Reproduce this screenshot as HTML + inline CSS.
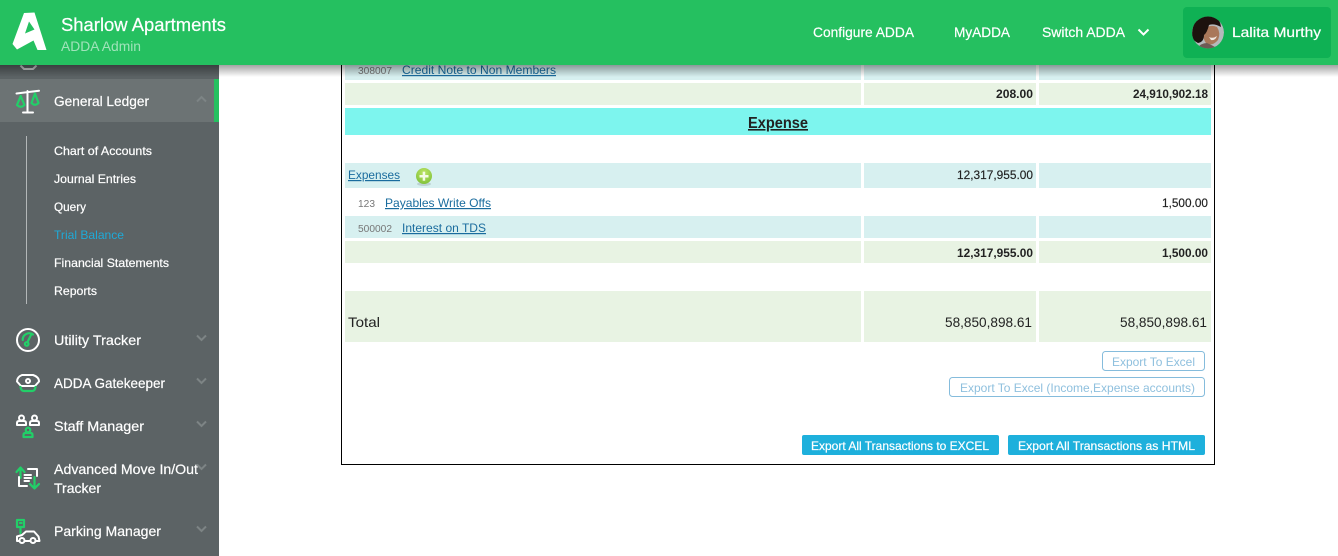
<!DOCTYPE html>
<html lang="en">
<head>
<meta charset="utf-8">
<title>Trial Balance</title>
<style>
html,body{margin:0;padding:0;width:1338px;height:556px;overflow:hidden;background:#fff}
svg{display:block;position:absolute;left:0;top:0}
text{font-family:"Liberation Sans",sans-serif}
.w{fill:#fff;stroke:#fff;stroke-width:.2px}
.s{font-size:12px}
.m{font-size:14px}
.n{font-size:12px;fill:#222;stroke:#222;stroke-width:.15px}
.b{font-weight:bold;font-size:12px;fill:#222}
.c{font-size:10px;fill:#777}
.l{font-size:12px;fill:#1a6c9e;text-decoration:underline}
.ib{stroke:#fff;stroke-width:2;fill:none;stroke-linecap:round;stroke-linejoin:round}
.ig{stroke:#22cf68;stroke-width:2.2;fill:none;stroke-linecap:round;stroke-linejoin:round}
.ch{stroke:#7d8485;stroke-width:2;fill:none}
</style>
</head>
<body>
<svg width="1338" height="556" viewBox="0 0 1338 556" xmlns="http://www.w3.org/2000/svg">
<defs>
<linearGradient id="sh" x1="0" y1="0" x2="0" y2="1"><stop offset="0" stop-color="#000" stop-opacity=".36"/><stop offset="1" stop-color="#000" stop-opacity="0"/></linearGradient>
<radialGradient id="pl" cx=".5" cy=".3" r=".75"><stop offset="0" stop-color="#bfe565"/><stop offset="1" stop-color="#7cc038"/></radialGradient>
<clipPath id="av"><circle cx="1208" cy="32.500" r="16"/></clipPath>
</defs>

<!-- sidebar -->
<rect x="0" y="65" width="219" height="491" fill="#5c6365"/>
<rect x="0" y="79" width="214" height="43" fill="#6c7374"/>
<rect x="214" y="79" width="5" height="43" fill="#25c060"/>
<rect x="26" y="136" width="1" height="168" fill="#b3b7b8"/>
<path d="M20.500 65.500 24 69H33L36.500 65.500" fill="none" stroke="#c9cccc" stroke-width="2"/>

<!-- table frame -->
<rect x="341" y="60" width="1" height="405" fill="#000"/>
<rect x="1214" y="60" width="1" height="405" fill="#000"/>
<rect x="341" y="464" width="874" height="1" fill="#000"/>

<!-- table rows -->
<g fill="#d7f0f0">
<rect x="345" y="60" width="516" height="20"/><rect x="864" y="60" width="172" height="20"/><rect x="1039" y="60" width="172" height="20"/>
<rect x="345" y="163" width="516" height="25"/><rect x="864" y="163" width="172" height="25"/><rect x="1039" y="163" width="172" height="25"/>
<rect x="345" y="216" width="516" height="22"/><rect x="864" y="216" width="172" height="22"/><rect x="1039" y="216" width="172" height="22"/>
</g>
<g fill="#e8f3e3">
<rect x="345" y="83" width="516" height="22"/><rect x="864" y="83" width="172" height="22"/><rect x="1039" y="83" width="172" height="22"/>
<rect x="345" y="241" width="516" height="22"/><rect x="864" y="241" width="172" height="22"/><rect x="1039" y="241" width="172" height="22"/>
<rect x="345" y="291" width="516" height="51"/><rect x="864" y="291" width="172" height="51"/><rect x="1039" y="291" width="172" height="51"/>
</g>
<rect x="345" y="108" width="866" height="27" fill="#7df5ee"/>

<!-- table text -->
<text class="c" x="358" y="74" textLength="34" lengthAdjust="spacingAndGlyphs">308007</text>
<text class="l" x="402" y="74" textLength="154" lengthAdjust="spacingAndGlyphs">Credit Note to Non Members</text>
<text class="b" x="996" y="98" textLength="37" lengthAdjust="spacingAndGlyphs">208.00</text>
<text class="b" x="1133" y="98" textLength="75" lengthAdjust="spacingAndGlyphs">24,910,902.18</text>
<text x="748" y="128" font-size="16" font-weight="bold" fill="#222" text-decoration="underline" textLength="60" lengthAdjust="spacingAndGlyphs">Expense</text>
<text class="l" x="348" y="179" textLength="52" lengthAdjust="spacingAndGlyphs">Expenses</text>
<ellipse cx="424" cy="184" rx="7" ry="2" fill="#000" opacity=".12"/>
<circle cx="424" cy="176" r="8" fill="url(#pl)"/>
<rect x="419.500" y="175" width="9" height="2.500" fill="#f4fbe6"/><rect x="422.700" y="171.700" width="2.500" height="9" fill="#f4fbe6"/>
<text class="n" x="957" y="179" textLength="76" lengthAdjust="spacingAndGlyphs">12,317,955.00</text>
<text class="c" x="358" y="207" textLength="17" lengthAdjust="spacingAndGlyphs">123</text>
<text class="l" x="385" y="207" textLength="106" lengthAdjust="spacingAndGlyphs">Payables Write Offs</text>
<text class="n" x="1162" y="207" textLength="46" lengthAdjust="spacingAndGlyphs">1,500.00</text>
<text class="c" x="358" y="232" textLength="34" lengthAdjust="spacingAndGlyphs">500002</text>
<text class="l" x="402" y="232" textLength="84" lengthAdjust="spacingAndGlyphs">Interest on TDS</text>
<text class="b" x="957" y="257" textLength="76" lengthAdjust="spacingAndGlyphs">12,317,955.00</text>
<text class="b" x="1162" y="257" textLength="46" lengthAdjust="spacingAndGlyphs">1,500.00</text>
<text x="348" y="327" font-size="14" fill="#222" textLength="32" lengthAdjust="spacingAndGlyphs">Total</text>
<text x="945" y="327" font-size="14" fill="#222" textLength="87" lengthAdjust="spacingAndGlyphs">58,850,898.61</text>
<text x="1120" y="327" font-size="14" fill="#222" textLength="87" lengthAdjust="spacingAndGlyphs">58,850,898.61</text>

<!-- buttons -->
<rect x="1102.500" y="351.500" width="102" height="19" rx="3" fill="#fff" stroke="#85bcdc"/>
<text x="1112" y="366" font-size="12" fill="#8fc0de" textLength="83" lengthAdjust="spacingAndGlyphs">Export To Excel</text>
<rect x="949.500" y="377.500" width="255" height="19" rx="3" fill="#fff" stroke="#85bcdc"/>
<text x="960" y="392" font-size="12" fill="#8fc0de" textLength="235" lengthAdjust="spacingAndGlyphs">Export To Excel (Income,Expense accounts)</text>
<rect x="802" y="435" width="197" height="20" rx="2" fill="#1eb0dc"/>
<text class="w" x="811" y="450" font-size="12" textLength="178" lengthAdjust="spacingAndGlyphs">Export All Transactions to EXCEL</text>
<rect x="1008" y="435" width="197" height="20" rx="2" fill="#1eb0dc"/>
<text class="w" x="1018" y="450" font-size="12" textLength="177" lengthAdjust="spacingAndGlyphs">Export All Transactions as HTML</text>

<!-- sidebar text -->
<text class="w m" x="54" y="106" textLength="95" lengthAdjust="spacingAndGlyphs">General Ledger</text>
<text class="w s" x="54" y="155" textLength="98" lengthAdjust="spacingAndGlyphs">Chart of Accounts</text>
<text class="w s" x="54" y="183" textLength="82" lengthAdjust="spacingAndGlyphs">Journal Entries</text>
<text class="w s" x="54" y="211" textLength="32" lengthAdjust="spacingAndGlyphs">Query</text>
<text class="s" x="54" y="239" fill="#1eaad8" textLength="70" lengthAdjust="spacingAndGlyphs">Trial Balance</text>
<text class="w s" x="54" y="267" textLength="115" lengthAdjust="spacingAndGlyphs">Financial Statements</text>
<text class="w s" x="54" y="295" textLength="43" lengthAdjust="spacingAndGlyphs">Reports</text>
<text class="w m" x="54" y="345" textLength="87" lengthAdjust="spacingAndGlyphs">Utility Tracker</text>
<text class="w m" x="54" y="388" textLength="111" lengthAdjust="spacingAndGlyphs">ADDA Gatekeeper</text>
<text class="w m" x="54" y="431" textLength="90" lengthAdjust="spacingAndGlyphs">Staff Manager</text>
<text class="w m" x="54" y="474" textLength="144" lengthAdjust="spacingAndGlyphs">Advanced Move In/Out</text>
<text class="w m" x="54" y="493" textLength="47" lengthAdjust="spacingAndGlyphs">Tracker</text>
<text class="w m" x="54" y="536" textLength="107" lengthAdjust="spacingAndGlyphs">Parking Manager</text>

<!-- chevrons -->
<path class="ch" d="M197 101.500 201.500 97 206 101.500"/>
<path class="ch" d="M197 335.500 201.500 340 206 335.500"/>
<path class="ch" d="M197 378.500 201.500 383 206 378.500"/>
<path class="ch" d="M197 421.500 201.500 426 206 421.500"/>
<path class="ch" d="M197 464.500 201.500 469 206 464.500"/>
<path class="ch" d="M197 526.500 201.500 531 206 526.500"/>

<!-- icon: scales -->
<path class="ib" d="M16.500 93.500 39 90.700M27.500 91V112M23 112.500H33"/>
<path class="ig" d="M20.700 96 17 105Q20.700 108.500 24.500 105ZM35 93.500 31.500 103Q35 106.500 38.500 103Z"/>
<!-- icon: gauge -->
<circle class="ib" cx="28" cy="340" r="11"/>
<path class="ig" d="M22.700 340A6.500 6.500 0 0 1 33 334.500"/>
<path class="ig" d="M27.500 342 31.500 334"/>
<circle class="ig" cx="26.700" cy="344" r="1.800"/>
<!-- icon: gatekeeper -->
<path class="ib" d="M22 375H33Q39 377 39 381.500L35 386H21L17 381.500Q17 377 22 375Z"/>
<circle class="ib" cx="28" cy="381" r="2"/>
<path class="ig" d="M20.500 387Q21 391 24 391H32Q35 391 35.500 387"/>
<!-- icon: staff -->
<path class="ib" d="M17 425V423Q17 421 19 421H24Q26 421 26 423V425ZM30 425V423Q30 421 32 421H37Q39 421 39 423V425Z"/>
<circle class="ib" cx="21.500" cy="418" r="2.500"/>
<circle class="ib" cx="34.500" cy="418" r="2.500"/>
<path class="ig" d="M23.500 437V435Q23.500 433 25.500 433H30.500Q32.500 433 32.500 435V437Z"/>
<circle class="ig" cx="28" cy="430" r="2.300"/>
<!-- icon: move -->
<path class="ig" d="M16.500 472 20.500 467.500 24.500 472M20.500 468V478"/>
<path class="ig" d="M30 484 34.500 488.500 39 484M34.500 488V477"/>
<path class="ib" d="M28 469H37V476M19 477V486H27M24.500 475H31M24.500 478H31M24.500 481H29"/>
<!-- icon: parking -->
<rect class="ig" x="17" y="520" width="7" height="7"/>
<path class="ig" d="M20.500 527V533M20 523H21.500"/>
<path class="ib" d="M17 541V536.500L22 535 26 531.500H34L38.500 536.500 39.500 541Z"/>
<circle cx="22" cy="540.500" r="2.500" fill="#5c6365" stroke="#fff" stroke-width="2"/>
<circle cx="33" cy="540.500" r="2.500" fill="#5c6365" stroke="#fff" stroke-width="2"/>

<!-- header shadow -->
<rect x="0" y="65" width="1338" height="12" fill="url(#sh)"/>
<!-- header -->
<rect x="0" y="0" width="1338" height="65" fill="#25c060"/>
<path fill="#fff" fill-rule="evenodd" d="M24 13 34.500 12.500 46.500 50 37.500 50 33.500 40.500 17 49.500 12.500 44ZM29 21.500 25 33.500 34.500 29.500Z"/>
<text class="w" x="61" y="31" font-size="18" textLength="165" lengthAdjust="spacingAndGlyphs">Sharlow Apartments</text>
<text x="61" y="51" font-size="14" fill="#a0e3ba" textLength="80" lengthAdjust="spacingAndGlyphs">ADDA Admin</text>
<text class="w m" x="813" y="37" textLength="101" lengthAdjust="spacingAndGlyphs">Configure ADDA</text>
<text class="w m" x="954" y="37" textLength="56" lengthAdjust="spacingAndGlyphs">MyADDA</text>
<text class="w m" x="1042" y="37" textLength="83" lengthAdjust="spacingAndGlyphs">Switch ADDA</text>
<path d="M1138.500 29.500 1143.500 34.500 1148.500 29.500" fill="none" stroke="#fff" stroke-width="2"/>
<rect x="1183" y="7" width="148" height="51" rx="4" fill="#0fb154"/>
<g clip-path="url(#av)">
<circle cx="1208" cy="32.500" r="16" fill="#b5b9bc"/>
<path fill="#a9785a" d="M1204 29Q1210 24 1217 27 1221 33 1218 40 1213 46 1207 44 1202 40 1204 29Z"/>
<path fill="#6e5a55" d="M1196 50Q1200 43 1207 43 1214 46 1220 50Z"/>
<path fill="#1c120e" d="M1192 36Q1192 16 1208 15 1220 16 1221 27 1214 23 1209 25 1207 33 1204 35 1204 42 1198 43 1192 40 1192 36Z"/>
<path fill="#efe7df" d="M1209 37Q1213 39 1217 36 1215 41 1211 40Z"/>
</g>
<text class="w" x="1232" y="37" font-size="14" textLength="89" lengthAdjust="spacingAndGlyphs">Lalita Murthy</text>
</svg>
</body>
</html>
